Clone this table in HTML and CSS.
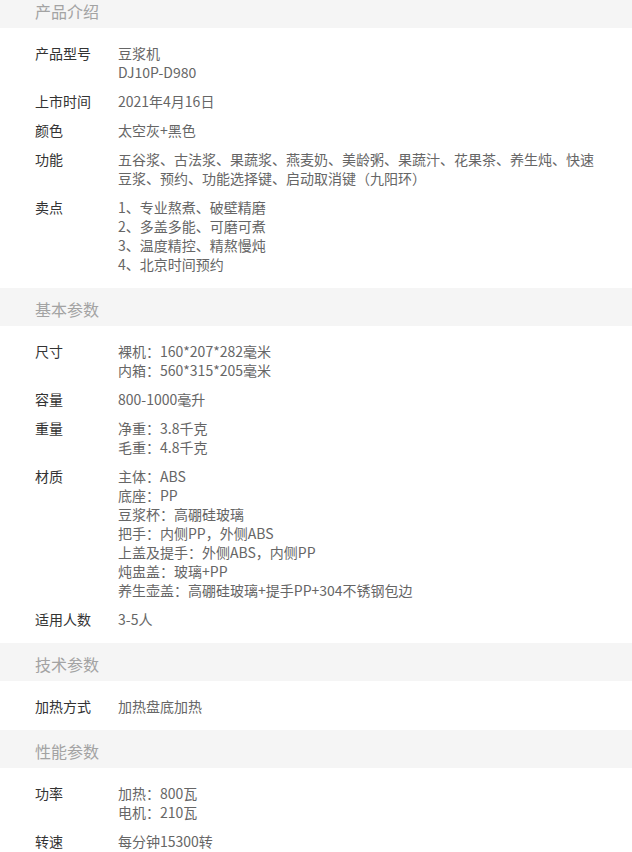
FILE: index.html
```html
<html>
    <head>
        <meta charset="utf-8" />
        <title>产品参数</title>
        <meta name="viewport" content="width=device-width, initial-scale=1">
        <link rel="stylesheet" href="styles.css">
    </head>
    <body>
        <div class="spec">
            <div class="spec-title">产品介绍</div>
            <div class="spec-list">
                <div class="spec-row"><div class="spec-name">产品型号</div><div class="spec-value">豆浆机<br>DJ10P-D980</div></div>
                <div class="spec-row"><div class="spec-name">上市时间</div><div class="spec-value">2021年4月16日</div></div>
                <div class="spec-row"><div class="spec-name">颜色</div><div class="spec-value">太空灰+黑色</div></div>
                <div class="spec-row"><div class="spec-name">功能</div><div class="spec-value">五谷浆、古法浆、果蔬浆、燕麦奶、美龄粥、果蔬汁、花果茶、养生炖、快速豆浆、预约、功能选择键、启动取消键（九阳环）</div></div>
                <div class="spec-row"><div class="spec-name">卖点</div><div class="spec-value">1、专业熬煮、破壁精磨<br>2、多盖多能、可磨可煮<br>3、温度精控、精熬慢炖<br>4、北京时间预约</div></div>
            </div>

            <div class="spec-title">基本参数</div>
            <div class="spec-list">
                <div class="spec-row"><div class="spec-name">尺寸</div><div class="spec-value">裸机：160*207*282毫米<br>内箱：560*315*205毫米</div></div>
                <div class="spec-row"><div class="spec-name">容量</div><div class="spec-value">800-1000毫升</div></div>
                <div class="spec-row"><div class="spec-name">重量</div><div class="spec-value">净重：3.8千克<br>毛重：4.8千克</div></div>
                <div class="spec-row"><div class="spec-name">材质</div><div class="spec-value">主体：ABS<br>底座：PP<br>豆浆杯：高硼硅玻璃<br>把手：内侧PP，外侧ABS<br>上盖及提手：外侧ABS，内侧PP<br>炖盅盖：玻璃+PP<br>养生壶盖：高硼硅玻璃+提手PP+304不锈钢包边</div></div>
                <div class="spec-row"><div class="spec-name">适用人数</div><div class="spec-value">3-5人</div></div>
            </div>

            <div class="spec-title">技术参数</div>
            <div class="spec-list">
                <div class="spec-row"><div class="spec-name">加热方式</div><div class="spec-value">加热盘底加热</div></div>
            </div>

            <div class="spec-title">性能参数</div>
            <div class="spec-list">
                <div class="spec-row"><div class="spec-name">功率</div><div class="spec-value">加热：800瓦<br>电机：210瓦</div></div>
                <div class="spec-row"><div class="spec-name">转速</div><div class="spec-value">每分钟15300转</div></div>
            </div>
        </div>
    </body>
</html>
```

FILE: styles.css
```css
body {
    margin: 0;
    background: #fff;
    font-family: "Noto Sans CJK SC", "Liberation Sans", sans-serif;
}

.spec {
    margin-top: -10px;
}

.spec-title {
    height: 38px;
    box-sizing: border-box;
    padding: 4px 0 0 35px;
    line-height: 34px;
    background-color: #f5f5f5;
    color: #a3a3a3;
    font-size: 16px;
}

.spec-list {
    padding: 16px 35px 14px 35px;
    display: flex;
    flex-direction: column;
    gap: 10px;
}

.spec-row {
    display: flex;
    font-size: 14px;
    line-height: 19px;
}

.spec-name {
    width: 83px;
    flex-shrink: 0;
    color: #333;
}

.spec-value {
    flex: 1;
    color: #666;
}
```
